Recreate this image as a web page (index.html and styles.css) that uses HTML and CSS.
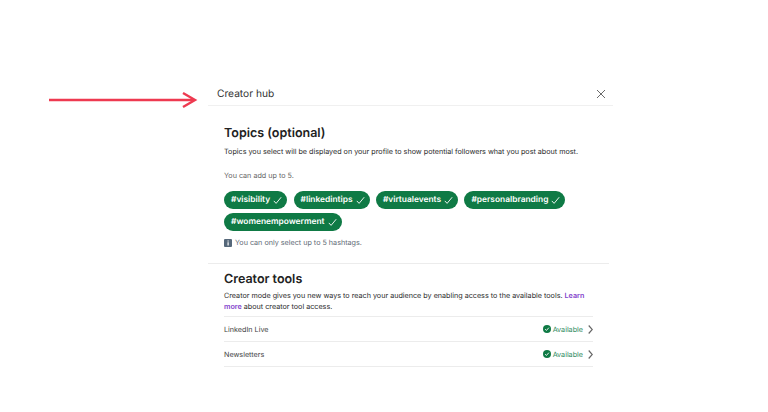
FILE: index.html
```html
<!DOCTYPE html>
<html lang="en">
  <head>
    <meta charset="UTF-8" />
    <meta name="viewport" content="width=device-width, initial-scale=1.0" />
    <title>Creator hub</title>
    <link rel="stylesheet" href="styles.css">
  </head>
  <body>
    <svg class="arrow" width="150" height="18" viewBox="0 0 150 18" fill="none" stroke="#ee3a50" stroke-width="2.4">
      <path d="M0 9H145" />
      <path d="M134 2L146 9L134 16" />
    </svg>

    <div class="panel">
      <div class="panel-header">
        <span class="panel-title">Creator hub</span>
        <svg class="close" width="10" height="10" viewBox="0 0 10 10" fill="none" stroke="#6a6a6a" stroke-width="1">
          <path d="M1 1L9 9M9 1L1 9" />
        </svg>
      </div>

      <div class="section topics">
        <h2 class="section-title">Topics (optional)</h2>
        <p class="text">Topics you select will be displayed on your profile to show potential followers what you post about most.</p>
        <p class="text muted add-note">You can add up to 5.</p>

        <div class="tags">
          <span class="tag">#visibility <svg width="9" height="9" viewBox="0 0 11 10" fill="none" stroke="#fff" stroke-width="1.1"><path d="M1 5.5L3.8 8.5L10 1" /></svg></span>
          <span class="tag">#linkedintips <svg width="9" height="9" viewBox="0 0 11 10" fill="none" stroke="#fff" stroke-width="1.1"><path d="M1 5.5L3.8 8.5L10 1" /></svg></span>
          <span class="tag">#virtualevents <svg width="9" height="9" viewBox="0 0 11 10" fill="none" stroke="#fff" stroke-width="1.1"><path d="M1 5.5L3.8 8.5L10 1" /></svg></span>
          <span class="tag">#personalbranding <svg width="9" height="9" viewBox="0 0 11 10" fill="none" stroke="#fff" stroke-width="1.1"><path d="M1 5.5L3.8 8.5L10 1" /></svg></span>
          <span class="tag">#womenempowerment <svg width="9" height="9" viewBox="0 0 11 10" fill="none" stroke="#fff" stroke-width="1.1"><path d="M1 5.5L3.8 8.5L10 1" /></svg></span>
        </div>

        <div class="limit-note">
          <svg width="8" height="8" viewBox="0 0 8 8">
            <rect width="8" height="8" rx="1" fill="#56687a" />
            <path d="M3.5 1.5h1.2v1H3.5zM3.5 3.3h1.2v3.2H3.5z" fill="#fff" />
          </svg>
          <span>You can only select up to 5 hashtags.</span>
        </div>
      </div>

      <div class="section tools">
        <h2 class="section-title">Creator tools</h2>
        <p class="text tools-text">Creator mode gives you new ways to reach your audience by enabling access to the available tools. <a class="link" href="#">Learn</a> <a class="link" href="#">more</a> about creator tool access.</p>

        <div class="tool-row">
          <span>LinkedIn Live</span>
          <span class="tool-status">
            <svg width="8" height="8" viewBox="0 0 9 9"><circle cx="4.5" cy="4.5" r="4.5" fill="#0f7a45" /><path d="M2.4 4.7L3.9 6.1L6.6 3" fill="none" stroke="#fff" stroke-width="1" /></svg>
            <span>Available</span>
            <svg class="chevron" width="5" height="9" viewBox="0 0 5 9" fill="none" stroke="#666" stroke-width="1.2"><path d="M.7 .5L4.3 4.5L.7 8.5" /></svg>
          </span>
        </div>
        <div class="tool-row">
          <span>Newsletters</span>
          <span class="tool-status">
            <svg width="8" height="8" viewBox="0 0 9 9"><circle cx="4.5" cy="4.5" r="4.5" fill="#0f7a45" /><path d="M2.4 4.7L3.9 6.1L6.6 3" fill="none" stroke="#fff" stroke-width="1" /></svg>
            <span>Available</span>
            <svg class="chevron" width="5" height="9" viewBox="0 0 5 9" fill="none" stroke="#666" stroke-width="1.2"><path d="M.7 .5L4.3 4.5L.7 8.5" /></svg>
          </span>
        </div>
      </div>
    </div>
  </body>
</html>
```

FILE: styles.css
```css
body {
  margin: 0;
  padding: 81px 0 0 208px;
  background-color: #fff;
  color: #2b2b2b;
  font-family: Inter, "Liberation Sans", sans-serif;
  text-rendering: geometricPrecision;
}
.arrow {
  position: absolute;
  left: 49px;
  top: 91px;
}
.panel {
  width: 404px;
}
.panel-header {
  display: flex;
  justify-content: space-between;
  align-items: center;
  height: 23px;
  padding: 1px 7px 0 9px;
  border-bottom: 1px solid #f0f0f0;
  margin-right: -1px;
}
.panel-title {
  font-size: 10.2px;
  color: #333;
}
.close {
  margin-top: 1px;
}
.section {
  padding: 0 19px 0 16px;
}
.topics {
  padding-top: 20px;
  padding-bottom: 15px;
  border-bottom: 1px solid #ececec;
  margin-right: 3px;
}
.tools {
  padding-top: 8px;
}
.section-title {
  margin: 0;
  font-size: 12.5px;
  line-height: 16px;
  font-weight: 600;
  color: #222;
}
.text {
  margin: 4px 0 0;
  font-size: 7.2px;
  line-height: 11px;
  color: #2b2b2b;
}
.muted {
  color: #666;
}
.add-note {
  margin-top: 13px;
}
.tags {
  display: flex;
  flex-wrap: wrap;
  gap: 4px 6.4px;
  margin-top: 10px;
}
.tag {
  display: flex;
  align-items: center;
  gap: 3px;
  height: 18px;
  padding: 0 5px 0 7px;
  border-radius: 9px;
  background-color: #0f7a45;
  color: #fff;
  font-size: 8.4px;
  font-weight: 600;
}
.limit-note {
  display: flex;
  align-items: center;
  gap: 3px;
  margin-top: 6px;
  font-size: 7.2px;
  line-height: 11px;
  color: #5f6b76;
}
.tools-text {
  margin-top: 2px;
}
.link {
  color: #8344cc;
  font-weight: 600;
  text-decoration: none;
}
.tool-row {
  display: flex;
  justify-content: space-between;
  align-items: center;
  height: 24px;
  border-top: 1px solid #ececec;
  font-size: 7.2px;
  color: #444;
}
.tools-text + .tool-row {
  margin-top: 4px;
}
.tool-row:last-child {
  border-bottom: 1px solid #ececec;
}
.tool-status {
  display: flex;
  align-items: center;
  gap: 2px;
  color: #2e8b5e;
}
.chevron {
  margin-left: 3px;
}
```
